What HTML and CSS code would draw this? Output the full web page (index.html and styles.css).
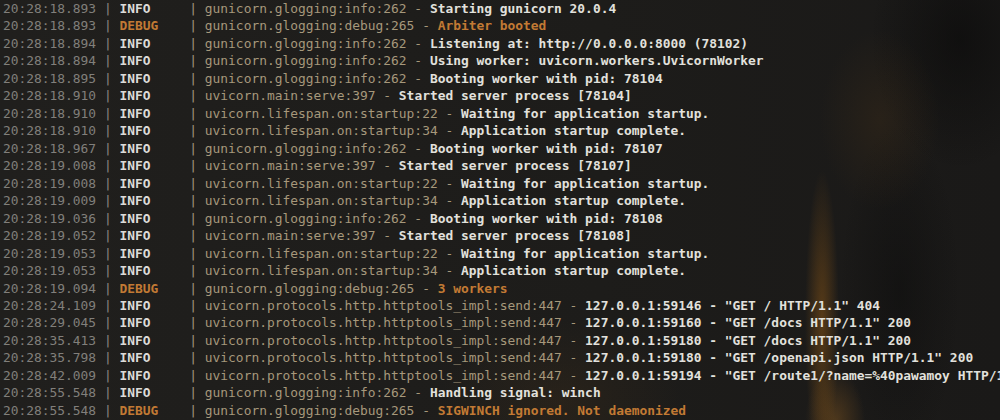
FILE: index.html
```html
<!DOCTYPE html>
<html>
<head>
<meta charset="utf-8">
<link rel="stylesheet" href="styles.css">
</head>
<body>
<div class="backdrop"></div>
<main class="log">
<div class="line"><span class="ts">20:28:18.893</span><span class="p1"> | </span><span class="lv info">INFO    </span><span class="p2"> | </span><span class="mod">gunicorn.glogging:info:262 - </span><span class="msg">Starting gunicorn 20.0.4</span></div>
<div class="line"><span class="ts">20:28:18.893</span><span class="p1"> | </span><span class="lv debug">DEBUG   </span><span class="p2"> | </span><span class="mod">gunicorn.glogging:debug:265 - </span><span class="msg debug">Arbiter booted</span></div>
<div class="line"><span class="ts">20:28:18.894</span><span class="p1"> | </span><span class="lv info">INFO    </span><span class="p2"> | </span><span class="mod">gunicorn.glogging:info:262 - </span><span class="msg">Listening at: http://0.0.0.0:8000 (78102)</span></div>
<div class="line"><span class="ts">20:28:18.894</span><span class="p1"> | </span><span class="lv info">INFO    </span><span class="p2"> | </span><span class="mod">gunicorn.glogging:info:262 - </span><span class="msg">Using worker: uvicorn.workers.UvicornWorker</span></div>
<div class="line"><span class="ts">20:28:18.895</span><span class="p1"> | </span><span class="lv info">INFO    </span><span class="p2"> | </span><span class="mod">gunicorn.glogging:info:262 - </span><span class="msg">Booting worker with pid: 78104</span></div>
<div class="line"><span class="ts">20:28:18.910</span><span class="p1"> | </span><span class="lv info">INFO    </span><span class="p2"> | </span><span class="mod">uvicorn.main:serve:397 - </span><span class="msg">Started server process [78104]</span></div>
<div class="line"><span class="ts">20:28:18.910</span><span class="p1"> | </span><span class="lv info">INFO    </span><span class="p2"> | </span><span class="mod">uvicorn.lifespan.on:startup:22 - </span><span class="msg">Waiting for application startup.</span></div>
<div class="line"><span class="ts">20:28:18.910</span><span class="p1"> | </span><span class="lv info">INFO    </span><span class="p2"> | </span><span class="mod">uvicorn.lifespan.on:startup:34 - </span><span class="msg">Application startup complete.</span></div>
<div class="line"><span class="ts">20:28:18.967</span><span class="p1"> | </span><span class="lv info">INFO    </span><span class="p2"> | </span><span class="mod">gunicorn.glogging:info:262 - </span><span class="msg">Booting worker with pid: 78107</span></div>
<div class="line"><span class="ts">20:28:19.008</span><span class="p1"> | </span><span class="lv info">INFO    </span><span class="p2"> | </span><span class="mod">uvicorn.main:serve:397 - </span><span class="msg">Started server process [78107]</span></div>
<div class="line"><span class="ts">20:28:19.008</span><span class="p1"> | </span><span class="lv info">INFO    </span><span class="p2"> | </span><span class="mod">uvicorn.lifespan.on:startup:22 - </span><span class="msg">Waiting for application startup.</span></div>
<div class="line"><span class="ts">20:28:19.009</span><span class="p1"> | </span><span class="lv info">INFO    </span><span class="p2"> | </span><span class="mod">uvicorn.lifespan.on:startup:34 - </span><span class="msg">Application startup complete.</span></div>
<div class="line"><span class="ts">20:28:19.036</span><span class="p1"> | </span><span class="lv info">INFO    </span><span class="p2"> | </span><span class="mod">gunicorn.glogging:info:262 - </span><span class="msg">Booting worker with pid: 78108</span></div>
<div class="line"><span class="ts">20:28:19.052</span><span class="p1"> | </span><span class="lv info">INFO    </span><span class="p2"> | </span><span class="mod">uvicorn.main:serve:397 - </span><span class="msg">Started server process [78108]</span></div>
<div class="line"><span class="ts">20:28:19.053</span><span class="p1"> | </span><span class="lv info">INFO    </span><span class="p2"> | </span><span class="mod">uvicorn.lifespan.on:startup:22 - </span><span class="msg">Waiting for application startup.</span></div>
<div class="line"><span class="ts">20:28:19.053</span><span class="p1"> | </span><span class="lv info">INFO    </span><span class="p2"> | </span><span class="mod">uvicorn.lifespan.on:startup:34 - </span><span class="msg">Application startup complete.</span></div>
<div class="line"><span class="ts">20:28:19.094</span><span class="p1"> | </span><span class="lv debug">DEBUG   </span><span class="p2"> | </span><span class="mod">gunicorn.glogging:debug:265 - </span><span class="msg debug">3 workers</span></div>
<div class="line"><span class="ts">20:28:24.109</span><span class="p1"> | </span><span class="lv info">INFO    </span><span class="p2"> | </span><span class="mod">uvicorn.protocols.http.httptools_impl:send:447 - </span><span class="msg">127.0.0.1:59146 - "GET / HTTP/1.1" 404</span></div>
<div class="line"><span class="ts">20:28:29.045</span><span class="p1"> | </span><span class="lv info">INFO    </span><span class="p2"> | </span><span class="mod">uvicorn.protocols.http.httptools_impl:send:447 - </span><span class="msg">127.0.0.1:59160 - "GET /docs HTTP/1.1" 200</span></div>
<div class="line"><span class="ts">20:28:35.413</span><span class="p1"> | </span><span class="lv info">INFO    </span><span class="p2"> | </span><span class="mod">uvicorn.protocols.http.httptools_impl:send:447 - </span><span class="msg">127.0.0.1:59180 - "GET /docs HTTP/1.1" 200</span></div>
<div class="line"><span class="ts">20:28:35.798</span><span class="p1"> | </span><span class="lv info">INFO    </span><span class="p2"> | </span><span class="mod">uvicorn.protocols.http.httptools_impl:send:447 - </span><span class="msg">127.0.0.1:59180 - "GET /openapi.json HTTP/1.1" 200</span></div>
<div class="line"><span class="ts">20:28:42.009</span><span class="p1"> | </span><span class="lv info">INFO    </span><span class="p2"> | </span><span class="mod">uvicorn.protocols.http.httptools_impl:send:447 - </span><span class="msg">127.0.0.1:59194 - "GET /route1/?name=%40pawamoy HTTP/1.1" 200</span></div>
<div class="line"><span class="ts">20:28:55.548</span><span class="p1"> | </span><span class="lv info">INFO    </span><span class="p2"> | </span><span class="mod">gunicorn.glogging:info:262 - </span><span class="msg">Handling signal: winch</span></div>
<div class="line"><span class="ts">20:28:55.548</span><span class="p1"> | </span><span class="lv debug">DEBUG   </span><span class="p2"> | </span><span class="mod">gunicorn.glogging:debug:265 - </span><span class="msg debug">SIGWINCH ignored. Not daemonized</span></div>
</main>
</body>
</html>
```

FILE: styles.css
```css
html, body {
  margin: 0;
  padding: 0;
  width: 1000px;
  height: 420px;
  overflow: hidden;
  background: #1d1c1a;
}

.backdrop {
  position: absolute;
  inset: 0;
  z-index: 0;
  background:
    radial-gradient(ellipse 17px 150px at 822px 320px, rgba(160, 98, 22, 0.45), rgba(160, 98, 22, 0) 100%),
    radial-gradient(ellipse 30px 50px at 835px 420px, rgba(170, 110, 35, 0.35), rgba(170, 110, 35, 0) 100%),
    radial-gradient(ellipse 60px 90px at 880px 120px, rgba(80, 55, 25, 0.25), rgba(80, 55, 25, 0) 100%),
    radial-gradient(ellipse 90px 130px at 960px 40px, rgba(8, 8, 8, 0.55), rgba(8, 8, 8, 0) 100%),
    radial-gradient(ellipse 120px 80px at 560px 400px, rgba(80, 55, 25, 0.22), rgba(80, 55, 25, 0) 100%),
    radial-gradient(ellipse 60px 170px at 900px 290px, rgba(12, 12, 12, 0.5), rgba(12, 12, 12, 0) 100%),
    linear-gradient(90deg, #201f1d 0%, #1d1c1a 60%, #1a1918 100%);
}

.log {
  position: relative;
  z-index: 1;
  padding: 0 0 0 3px;
  height: 420px;
  overflow: hidden;
  font-family: "DejaVu Sans Mono", "Liberation Mono", monospace;
  font-size: 12.9px;
  line-height: 17.48px;
  color: #d9d8d4;
}

.line {
  height: 17.48px;
  white-space: pre;
}

.ts {
  color: #817f7b;
}

.p1 {
  color: #8a8884;
}

.p2 {
  color: #a29680;
}

.lv {
  font-weight: bold;
}

.info {
  color: #dcdbd8;
}

.debug {
  color: #c27a34;
}

.mod {
  color: #a6987b;
}

.msg {
  font-weight: bold;
  color: #e2e1dd;
}

.msg.debug {
  color: #c27a34;
}
```
